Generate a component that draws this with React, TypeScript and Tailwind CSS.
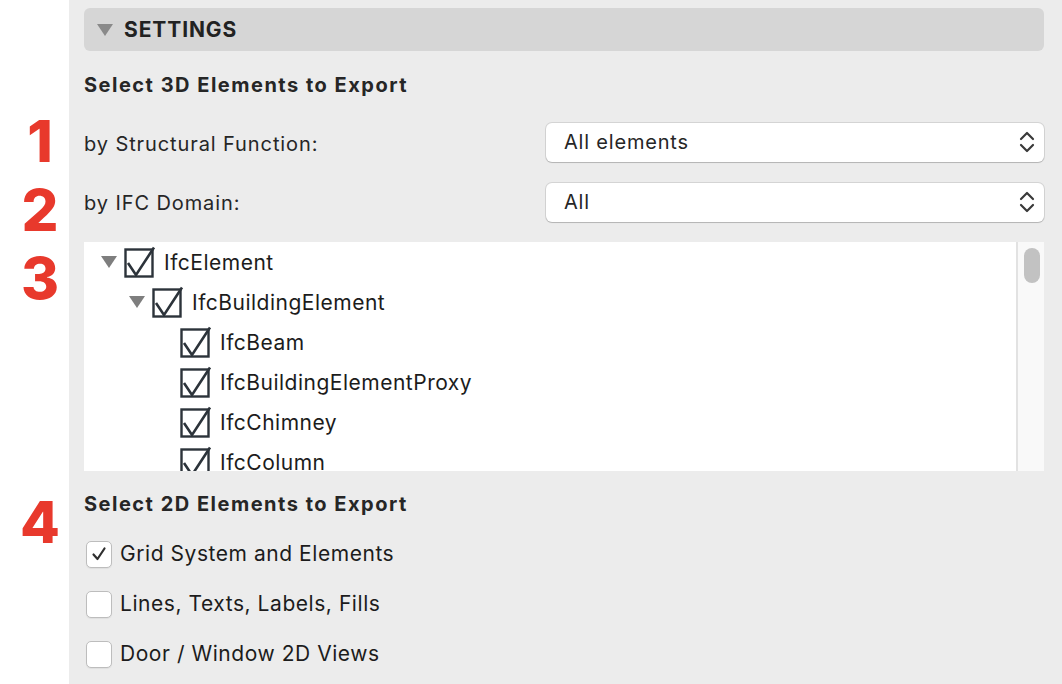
import React from "react";

const font = { fontFamily: "Inter, 'Noto Sans', sans-serif" };

function TreeCheck() {
  return (
    <svg width="32" height="32" viewBox="0 0 32 32" className="shrink-0">
      <rect x="1.5" y="3.5" width="27" height="27" fill="#fff" stroke="#2c333a" strokeWidth="2.4" />
      <path d="M4 17 L12 29 L30 1.5" fill="none" stroke="#2c333a" strokeWidth="2.6" strokeLinejoin="miter" />
    </svg>
  );
}

function Triangle() {
  return (
    <svg width="18" height="14" viewBox="0 0 18 14" className="shrink-0">
      <path d="M1 1 L17 1 L9 13 Z" fill="#7e7e7e" />
    </svg>
  );
}

function TreeRow({ level, label, expandable }: { level: number; label: string; expandable?: boolean }) {
  return (
    <div className="flex h-[40px] items-center" style={{ paddingLeft: 16 + level * 28 }}>
      <div className="flex w-[24px] items-center">{expandable && <Triangle />}</div>
      <TreeCheck />
      <span className="ml-[8px] mt-[1px] text-[21px] tracking-[0.5px] text-[#1c1c1c]">{label}</span>
    </div>
  );
}

function Select({ value }: { value: string }) {
  return (
    <div className="flex h-[39px] w-[498px] items-center justify-between rounded-[6px] bg-white pl-[18px] pr-[8px] shadow-[0_0_0_1px_rgba(0,0,0,0.1),0_1px_1px_rgba(0,0,0,0.15)]">
      <span className="text-[20px] tracking-[0.8px] text-[#262626]">{value}</span>
      <svg width="18" height="26" viewBox="0 0 18 26">
        <path d="M3 10 L9 4 L15 10" fill="none" stroke="#3a3a3a" strokeWidth="2.2" strokeLinecap="round" strokeLinejoin="round" />
        <path d="M3 16 L9 22 L15 16" fill="none" stroke="#3a3a3a" strokeWidth="2.2" strokeLinecap="round" strokeLinejoin="round" />
      </svg>
    </div>
  );
}

function Check2D({ checked, label }: { checked?: boolean; label: string }) {
  return (
    <div className="flex h-[50px] items-center pl-[2px]">
      <div className="flex h-[27px] w-[26px] items-center justify-center rounded-[5px] border border-[#bdbdbd] bg-white shadow-[0_1px_1px_rgba(0,0,0,0.06)]">
        {checked && (
          <svg width="16" height="16" viewBox="0 0 16 16">
            <path d="M2.5 8.5 L6.5 13 L13.5 2.5" fill="none" stroke="#2f2f2f" strokeWidth="2.2" strokeLinecap="round" strokeLinejoin="round" />
          </svg>
        )}
      </div>
      <span className="ml-[8px] text-[21px] tracking-[0.55px] text-[#1c1c1c]">{label}</span>
    </div>
  );
}

function Num({ n, mt }: { n: string; mt: string }) {
  return (
    <div className={`flex h-[48px] items-center justify-center pl-[11px] text-[58px] font-extrabold leading-none text-[#e8392c] ${mt}`}>
      {n}
    </div>
  );
}

export default function App() {
  return (
    <div className="flex h-[684px] w-[1062px] overflow-hidden bg-white" style={font}>
      {/* annotation gutter */}
      <div className="flex w-[69px] shrink-0 flex-col bg-white">
        <Num n="1" mt="mt-[117px]" />
        <Num n="2" mt="mt-[21px]" />
        <Num n="3" mt="mt-[20px]" />
        <Num n="4" mt="mt-[196px]" />
      </div>

      {/* settings panel */}
      <div className="flex flex-1 flex-col bg-[#ececec] pl-[15px] pr-[18px] pt-[8px]">
        <div className="flex h-[43px] items-center rounded-[6px] bg-[#d6d6d6] pl-[12px]">
          <svg width="18" height="14" viewBox="0 0 18 14">
            <path d="M1 1 L17 1 L9 13 Z" fill="#8a8a8a" />
          </svg>
          <span className="ml-[10px] text-[21px] font-bold tracking-[0.9px] text-[#222]">SETTINGS</span>
        </div>

        <div className="flex h-[61px] items-center pt-[6px]">
          <span className="text-[20px] font-bold tracking-[1.5px] text-[#262626]">Select 3D Elements to Export</span>
        </div>

        <div className="flex h-[60px] items-center justify-between">
          <span className="mt-[3px] text-[20px] tracking-[0.9px] text-[#262626]">by Structural Function:</span>
          <Select value="All elements" />
        </div>
        <div className="flex h-[60px] items-center justify-between">
          <span className="mt-[2px] text-[20px] tracking-[0.9px] text-[#262626]">by IFC Domain:</span>
          <Select value="All" />
        </div>

        <div className="mt-[10px] flex h-[229px]">
          <div className="flex-1 overflow-hidden bg-white">
            <TreeRow level={0} label="IfcElement" expandable />
            <TreeRow level={1} label="IfcBuildingElement" expandable />
            <TreeRow level={2} label="IfcBeam" />
            <TreeRow level={2} label="IfcBuildingElementProxy" />
            <TreeRow level={2} label="IfcChimney" />
            <TreeRow level={2} label="IfcColumn" />
          </div>
          <div className="w-[2px] bg-[#e2e2e2]" />
          <div className="w-[26px] bg-[#f9f9f9] pl-[6px] pt-[6px]">
            <div className="h-[35px] w-[16px] rounded-full bg-[#c2c2c2]" />
          </div>
        </div>

        <div className="flex h-[58px] items-center pt-[8px]">
          <span className="text-[20px] font-bold tracking-[1.5px] text-[#262626]">Select 2D Elements to Export</span>
        </div>

        <Check2D checked label="Grid System and Elements" />
        <Check2D label="Lines, Texts, Labels, Fills" />
        <Check2D label="Door / Window 2D Views" />
      </div>
    </div>
  );
}
